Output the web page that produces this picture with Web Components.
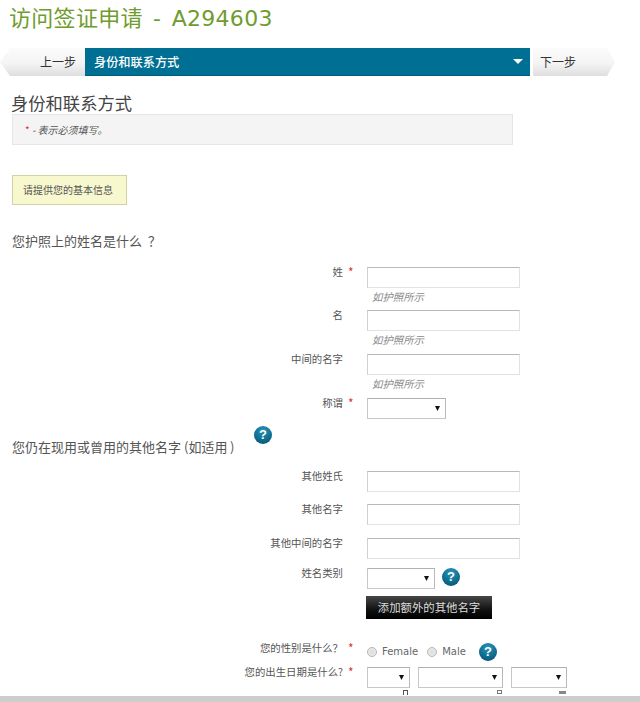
<!DOCTYPE html>
<html lang="zh-CN">
<head>
<meta charset="utf-8">
<title>访问签证申请</title>
<style>
  html, body { margin: 0; height: 702px; overflow: hidden; background: #fff; }
  body {
    display: flex;
    flex-direction: column;
    font: 10.4px "Noto Sans CJK SC", "DejaVu Sans", sans-serif;
    color: #555;
  }
  main { flex: 1; overflow: hidden; }
  .choices { display: flex; gap: 8px; }
  .qmark { font-family: "Noto Sans CJK TC", sans-serif; }
  .qmark.wide { margin-left: 6px; }
  .paren-open { margin: 0 0 0 3px; }
  .paren-close { margin-left: 2.5px; }
</style>
</head>
<body>
<main>
  <page-title>访问签证申请 - A294603</page-title>
  <step-nav prev="上一步" next="下一步">身份和联系方式</step-nav>
  <section-title>身份和联系方式</section-title>
  <note-box><i style="color:#d33;font-style:normal">*</i> - 表示必须填写。</note-box>
  <info-box>请提供您的基本信息</info-box>

  <question-title style="margin-top:27px">您护照上的姓名是什么<span class="qmark wide">？</span></question-title>

  <form-row required style="margin-top:17px"><span slot="label">姓</span><text-field></text-field></form-row>
  <field-hint>如护照所示</field-hint>
  <form-row style="margin-top:5px"><span slot="label">名</span><text-field></text-field></form-row>
  <field-hint>如护照所示</field-hint>
  <form-row style="margin-top:6px"><span slot="label">中间的名字</span><text-field></text-field></form-row>
  <field-hint>如护照所示</field-hint>
  <form-row required style="margin-top:6px"><span slot="label">称谓</span><select-box width="79"></select-box></form-row>

  <question-title help style="margin-top:19px">您仍在现用或曾用的其他名字<span class="paren-open">(</span>如适用<span class="paren-close">)</span></question-title>

  <form-row style="margin-top:15px"><span slot="label">其他姓氏</span><text-field></text-field></form-row>
  <form-row style="margin-top:12px"><span slot="label">其他名字</span><text-field></text-field></form-row>
  <form-row style="margin-top:13px"><span slot="label">其他中间的名字</span><text-field></text-field></form-row>
  <form-row style="margin-top:9px"><span slot="label">姓名类别</span><select-box width="68"></select-box><help-icon style="margin:-3px 0 0 7px"></help-icon></form-row>
  <form-row style="margin-top:7px"><dark-button>添加额外的其他名字</dark-button></form-row>

  <form-row required style="margin-top:24px"><span slot="label">您的性别是什么<span class="qmark">？</span></span>
    <radio-choice>Female</radio-choice><radio-choice style="margin-left:9px">Male</radio-choice><help-icon style="margin-left:13px"></help-icon>
  </form-row>
  <form-row required style="margin-top:6px"><span slot="label">您的出生日期是什么?</span>
    <div class="choices"><select-box width="43"></select-box><select-box width="85"></select-box><select-box width="56"></select-box></div>
  </form-row>
  <date-marks></date-marks>
</main>
<page-scrollbar></page-scrollbar>

<script>
  const BLUE = '#006f94';
  const LABEL_COLOR = '#555';
  const FIELD_BORDER = 'border: solid 1px #e2e2e2; border-top-color: #b8b8b8; border-left-color: #d0d0d0;';

  function defineSimple(name, styles, markup = '<slot></slot>') {
    window.customElements.define(name, class extends HTMLElement {
      constructor() {
        super();
        this.attachShadow({ mode: 'open' }).innerHTML = `<style>${styles}</style>${markup}`;
      }
    });
  }

  defineSimple('page-title', `
    :host {
      display: block;
      height: 48px;
      box-sizing: border-box;
      padding: 4px 0 0 9px;
      font: 22px/30px "DejaVu Sans", "Noto Sans CJK SC", sans-serif;
      letter-spacing: 0.3px;
      word-spacing: 3px;
      color: #6f9c2e;
      white-space: nowrap;
    }
  `);

  defineSimple('section-title', `
    :host {
      display: block;
      height: 18px;
      margin: 17px 0 0 11px;
      font-size: 17.3px;
      line-height: 20px;
      color: #444;
    }
  `);

  defineSimple('note-box', `
    :host {
      display: block;
      box-sizing: border-box;
      width: 501px;
      height: 31px;
      margin: 3px 0 0 12px;
      padding-left: 12px;
      border: solid 1px #e6e6e6;
      background: #f4f4f4;
      font-size: 10px;
      font-style: italic;
      line-height: 29px;
      color: #555;
    }
  `);

  defineSimple('info-box', `
    :host {
      display: block;
      box-sizing: border-box;
      width: 115px;
      height: 30px;
      margin: 30px 0 0 12px;
      padding-left: 10px;
      border: solid 1px #d2d2a6;
      background: #f8f8cf;
      font-size: 10px;
      line-height: 28px;
      color: #555;
    }
  `);

  defineSimple('field-hint', `
    :host {
      display: block;
      height: 16px;
      margin: 1px 0 0 372px;
      font-size: 10.4px;
      font-style: italic;
      line-height: 16px;
      color: #8a8a8a;
    }
  `);

  defineSimple('text-field', `
    :host { display: block; }
    input {
      display: block;
      box-sizing: border-box;
      width: 153px;
      height: 21px;
      padding: 0 4px;
      margin: 0;
      ${FIELD_BORDER}
      background: #fff;
      outline: none;
    }
  `, '<input type="text">');

  defineSimple('help-icon', `
    :host {
      display: inline-flex;
      flex: none;
      align-items: center;
      justify-content: center;
      width: 18px;
      height: 18px;
      border-radius: 50%;
      background: radial-gradient(circle at 50% 25%, #2a93b5 0%, #0f6f92 55%, #054a68 100%);
      font: bold 13px/18px "Liberation Sans", sans-serif;
      color: #fff;
    }
  `, '?');

  defineSimple('radio-choice', `
    :host {
      display: inline-flex;
      align-items: center;
      gap: 5px;
      font: 10px/16px "DejaVu Sans", sans-serif;
      color: #666;
    }
    .dot {
      width: 10px;
      height: 10px;
      box-sizing: border-box;
      border: solid 1px #b4b4b4;
      border-radius: 50%;
      background: radial-gradient(circle, #dcdcdc, #f0f0f0);
    }
  `, '<span class="dot"></span><slot></slot>');

  defineSimple('dark-button', `
    :host {
      display: block;
      margin-left: -1px;
      width: 126px;
      height: 23px;
      background: linear-gradient(#474747, #111 60%, #000);
      font-size: 11.4px;
      line-height: 23px;
      text-align: center;
      color: #ddd;
    }
  `);

  defineSimple('date-marks', `
    :host {
      display: flex;
      align-items: flex-start;
      height: 6px;
      margin: 2px 0 0 403px;
    }
    span { display: block; box-sizing: border-box; }
    .a { width: 5px; height: 5px; border: solid 1px #555; border-bottom: none; }
    .b { width: 5px; height: 4px; margin-left: 89px; border: solid 1px #777; }
    .c { width: 7px; height: 3px; margin: 1px 0 0 57px; background: #888; }
  `, '<span class="a"></span><span class="b"></span><span class="c"></span>');

  defineSimple('page-scrollbar', `
    :host {
      display: block;
      flex: none;
      height: 6px;
      background: #cdcdcd;
    }
  `, '');

  class QuestionTitle extends HTMLElement {
    constructor() {
      super();
      this.attachShadow({ mode: 'open' }).innerHTML = `
        <style>
          :host {
            display: block;
            position: relative;
            height: 18px;
            margin-left: 12px;
            font-size: 13px;
            line-height: 18px;
            color: ${LABEL_COLOR};
          }
          help-icon { position: absolute; left: 242px; top: -12px; }
        </style>
        <slot></slot>
        ${this.hasAttribute('help') ? '<help-icon></help-icon>' : ''}
      `;
    }
  }
  window.customElements.define('question-title', QuestionTitle);

  class FormRow extends HTMLElement {
    constructor() {
      super();
      this.attachShadow({ mode: 'open' }).innerHTML = `
        <style>
          :host {
            display: grid;
            grid-template-columns: 343px 24px 1fr;
            align-items: start;
            font-size: 10.4px;
            line-height: 10px;
            color: ${LABEL_COLOR};
          }
          .label { text-align: right; white-space: nowrap; }
          .star { margin-top: -1px; padding-left: 5px; color: #d33; font-size: 12px; line-height: 12px; }
          .control { display: flex; align-items: center; min-height: 14px; }
        </style>
        <div class="label"><slot name="label"></slot></div>
        <div class="star">${this.hasAttribute('required') ? '*' : ''}</div>
        <div class="control"><slot></slot></div>
      `;
    }
  }
  window.customElements.define('form-row', FormRow);

  class SelectBox extends HTMLElement {
    constructor() {
      super();
      const width = this.getAttribute('width') || 80;
      this.attachShadow({ mode: 'open' }).innerHTML = `
        <style>
          :host {
            display: block;
            flex: none;
            position: relative;
            width: ${width}px;
            height: 21px;
          }
          select {
            display: block;
            width: 100%;
            height: 100%;
            box-sizing: border-box;
            margin: 0;
            padding: 0;
            border: solid 1px #c8c8c8;
            border-top-color: #b0b0b0;
            border-right-color: #b8b8b8;
            border-radius: 0;
            appearance: none;
            background: #fff;
            outline: none;
          }
          svg { position: absolute; right: 6px; top: 8px; }
        </style>
        <select></select>
        <svg width="5" height="5" viewBox="0 0 5 5"><path d="M0 0H5L2.5 5Z" fill="#111"/></svg>
      `;
    }
  }
  window.customElements.define('select-box', SelectBox);

  class StepNav extends HTMLElement {
    constructor() {
      super();
      this.attachShadow({ mode: 'open' }).innerHTML = `
        <style>
          :host {
            display: flex;
            width: 615px;
            height: 28px;
            font-size: 12px;
            line-height: 28px;
            color: #333;
          }
          .step {
            width: 85px;
            box-sizing: border-box;
            background: linear-gradient(#fbfbfb, #f4f4f4 55%, #dedede);
          }
          .prev {
            padding-left: 40px;
            clip-path: polygon(0 50%, 10px 0, 100% 0, 100% 100%, 10px 100%);
          }
          .next {
            width: 82px;
            margin-left: 3px;
            padding-left: 7px;
            clip-path: polygon(0 0, 74px 0, 100% 50%, 74px 100%, 0 100%);
          }
          .current {
            flex: 1;
            display: flex;
            align-items: center;
            justify-content: space-between;
            box-sizing: border-box;
            padding: 0 7px 0 9px;
            border-bottom: solid 1px #005a78;
            background: ${BLUE};
            color: #fff;
            font-size: 12.2px;
            font-weight: 500;
          }
          svg { margin: 0 0 1px; }
        </style>
        <div class="step prev">${this.getAttribute('prev')}</div>
        <div class="current">
          <span><slot></slot></span>
          <svg width="10" height="5" viewBox="0 0 10 5"><path d="M0 0H10L5 5Z" fill="#fff"/></svg>
        </div>
        <div class="step next">${this.getAttribute('next')}</div>
      `;
    }
  }
  window.customElements.define('step-nav', StepNav);
</script>
</body>
</html>
